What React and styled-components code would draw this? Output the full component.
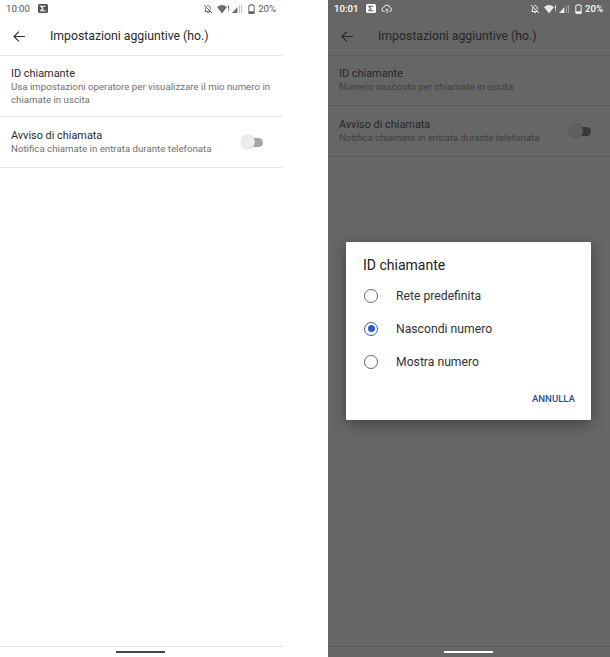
import React from 'react';
import styled, { createGlobalStyle } from 'styled-components';

const GlobalStyle = createGlobalStyle`
  html, body {
    margin: 0;
    padding: 0;
    background: #fff;
    font-family: Roboto, "Liberation Sans", sans-serif;
  }
`;

const Page = styled.div`
  display: flex;
  justify-content: space-between;
  width: 610px;
  height: 657px;
  overflow: hidden;
`;

const Screen = styled.div`
  position: relative;
  display: flex;
  flex-direction: column;
  width: ${(p) => (p.$dark ? '282px' : '283px')};
  height: 657px;
  background: ${(p) => (p.$dark ? '#666666' : '#ffffff')};
  --title: ${(p) => (p.$dark ? '#262626' : '#2b2b2b')};
  --sub: ${(p) => (p.$dark ? '#3f3f3f' : '#707070')};
  --line: ${(p) => (p.$dark ? '#5a5a5a' : '#e4e4e4')};
  --status: ${(p) => (p.$dark ? '#ffffff' : '#555555')};
  --badge: ${(p) => (p.$dark ? '#666666' : '#ffffff')};
  --nav: ${(p) => (p.$dark ? '#ffffff' : '#444444')};
`;

const StatusBar = styled.div`
  display: flex;
  align-items: center;
  height: 17px;
  padding: 0 7px 0 6px;
  color: var(--status);
  font-size: 9.6px;
  font-weight: ${(p) => (p.$dark ? 500 : 400)};
`;

const Time = styled.span`
  margin-right: 8px;
`;

const StatusIcons = styled.div`
  display: flex;
  align-items: center;
  margin-left: auto;
`;

const Icon = styled.svg`
  display: block;
  flex: none;
  margin-left: ${(p) => p.$ml || 0}px;
`;

const Percent = styled.span`
  margin-left: 3px;
`;

const Toolbar = styled.div`
  display: flex;
  align-items: center;
  height: 38px;
  padding-left: 13px;
  border-bottom: 1px solid var(--line);
`;

const Title = styled.div`
  margin-left: 25px;
  color: var(--title);
  font-size: 12.25px;
  line-height: 18px;
`;

const Row = styled.div`
  display: flex;
  align-items: center;
  justify-content: space-between;
  height: ${(p) => p.$height}px;
  padding: 0 0 ${(p) => p.$bottom || 0}px 11px;
  box-sizing: border-box;
  border-bottom: 1px solid var(--line);
`;

const RowText = styled.div`
  display: flex;
  flex-direction: column;
`;

const RowTitle = styled.div`
  color: var(--title);
  font-size: 10.9px;
  line-height: 15px;
`;

const RowSub = styled.div`
  max-width: 262px;
  color: var(--sub);
  font-size: 9.7px;
  line-height: 12.5px;
`;

const Toggle = styled.div`
  position: relative;
  flex: none;
  width: 18px;
  height: 9px;
  margin: 0 ${(p) => (p.$dark ? 19 : 20)}px 0 4px;
  border-radius: 5px;
  background: ${(p) => (p.$dark ? '#383838' : '#a4a4a4')};
`;

const Knob = styled.div`
  position: absolute;
  left: -4px;
  top: -3px;
  width: 14px;
  height: 14px;
  border-radius: 50%;
  background: ${(p) => (p.$dark ? '#5f5f5f' : '#ececec')};
  box-shadow: 0 0 1px rgba(0, 0, 0, 0.3);
`;

const NavBar = styled.div`
  display: flex;
  justify-content: center;
  align-items: center;
  height: 10px;
  margin-top: auto;
  border-top: 1px solid var(--line);
`;

const NavPill = styled.div`
  width: 49px;
  height: 2px;
  margin-right: 2px;
  background: var(--nav);
`;

const Dialog = styled.div`
  position: absolute;
  left: 18px;
  top: 242px;
  display: flex;
  flex-direction: column;
  width: 245px;
  height: 178px;
  padding: 15px 16px 0 17px;
  box-sizing: border-box;
  background: #fff;
  border-radius: 1px;
  box-shadow: 0 4px 14px rgba(0, 0, 0, 0.35);
`;

const DialogTitle = styled.div`
  margin-bottom: 6px;
  color: #222;
  font-size: 14px;
  line-height: 16px;
`;

const Option = styled.div`
  display: flex;
  align-items: center;
  gap: 18px;
  height: 33px;
  color: #333;
  font-size: 12.2px;
`;

const Radio = styled.span`
  display: flex;
  align-items: center;
  justify-content: center;
  width: 12px;
  height: 12px;
  border: 1.5px solid ${(p) => (p.$on ? '#2f5bc4' : '#666')};
  border-radius: 50%;
  margin-left: 1px;

  &::after {
    content: '';
    display: ${(p) => (p.$on ? 'block' : 'none')};
    width: 7px;
    height: 7px;
    border-radius: 50%;
    background: #2f5bc4;
  }
`;

const Actions = styled.div`
  display: flex;
  justify-content: flex-end;
  margin-top: 15px;
`;

const CancelButton = styled.div`
  color: #2c4f9e;
  font-size: 9.6px;
  font-weight: 500;
`;

const BackIcon = () => (
  <Icon width="12" height="11" viewBox="0 0 12 11" fill="none" stroke="var(--title)" strokeWidth="1.1">
    <path d="M12 5.5H1M5.8.7L1 5.5l4.8 4.8" />
  </Icon>
);

const SigmaIcon = () => (
  <Icon width="10" height="9" viewBox="0 0 10 9">
    <rect width="10" height="9" rx="1.5" fill="var(--status)" />
    <path d="M7.5 2.2H2.8L5 4.5 2.8 6.8h4.7" fill="none" stroke="var(--badge)" strokeWidth="1.1" />
  </Icon>
);

const CloudIcon = () => (
  <Icon $ml={5} width="12" height="10" viewBox="0 0 12 10" fill="none" stroke="var(--status)" strokeWidth="0.9">
    <path d="M3.5 7.5H3a2 2 0 0 1-.2-4A3.2 3.2 0 0 1 9 3.6a2 2 0 0 1 0 3.9h-.5M6 9V5M4.6 6.2L6 4.8l1.4 1.4" />
  </Icon>
);

const BellOffIcon = () => (
  <Icon width="10" height="10" viewBox="0 0 10 10" fill="none" stroke="var(--status)" strokeWidth="0.9">
    <path d="M1 1l8 8M3 3.2C2.7 3.8 2.7 4.5 2.7 6L1.8 7.4h5.6M3.8 1.9C5.6 1 7.3 2.2 7.3 4.2v1.4M4.2 8.6h1.6" />
  </Icon>
);

const WifiIcon = () => (
  <Icon $ml={4} width="13" height="10" viewBox="0 0 13 10">
    <path d="M0 3a8 8 0 0 1 10 0L5 9.5z" fill="var(--status)" opacity="0.85" />
    <path d="M11.5 1.5v3.2M11.5 5.7v1" stroke="var(--status)" strokeWidth="1" />
  </Icon>
);

const SignalIcon = () => (
  <Icon $ml={2} width="10" height="10" viewBox="0 0 10 10">
    <path d="M0 9l5.5-6V9z" fill="var(--status)" opacity="0.85" />
    <path d="M7.5 1v8M9.5 1v8" stroke="var(--status)" strokeWidth="0.8" opacity="0.45" />
  </Icon>
);

const BatteryIcon = () => (
  <Icon $ml={6} width="7" height="10" viewBox="0 0 7 10">
    <path d="M2.4.6h2.2v1h1.6v7.8H.8V1.6h1.6z" fill="none" stroke="var(--status)" strokeWidth="0.9" />
    <rect x="1" y="7.4" width="5" height="2" fill="var(--status)" />
  </Icon>
);

const Phone = ({ dark, time, subtitle, children }) => (
  <Screen $dark={dark}>
    <StatusBar $dark={dark}>
      <Time>{time}</Time>
      <SigmaIcon />
      {dark && <CloudIcon />}
      <StatusIcons>
        <BellOffIcon />
        <WifiIcon />
        <SignalIcon />
        <BatteryIcon />
        <Percent>20%</Percent>
      </StatusIcons>
    </StatusBar>
    <Toolbar>
      <BackIcon />
      <Title>Impostazioni aggiuntive (ho.)</Title>
    </Toolbar>
    <Row $height={dark ? 50 : 61} $bottom={dark ? 2 : 0}>
      <RowText>
        <RowTitle>ID chiamante</RowTitle>
        <RowSub>{subtitle}</RowSub>
      </RowText>
    </Row>
    <Row $height={51}>
      <RowText>
        <RowTitle>Avviso di chiamata</RowTitle>
        <RowSub>Notifica chiamate in entrata durante telefonata</RowSub>
      </RowText>
      <Toggle $dark={dark}>
        <Knob $dark={dark} />
      </Toggle>
    </Row>
    <NavBar>
      <NavPill />
    </NavBar>
    {children}
  </Screen>
);

const App = () => (
  <Page>
    <GlobalStyle />
    <Phone
      time="10:00"
      subtitle="Usa impostazioni operatore per visualizzare il mio numero in chiamate in uscita"
    />
    <Phone dark time="10:01" subtitle="Numero nascosto per chiamate in uscita">
      <Dialog>
        <DialogTitle>ID chiamante</DialogTitle>
        <Option>
          <Radio />
          Rete predefinita
        </Option>
        <Option>
          <Radio $on />
          Nascondi numero
        </Option>
        <Option>
          <Radio />
          Mostra numero
        </Option>
        <Actions>
          <CancelButton>ANNULLA</CancelButton>
        </Actions>
      </Dialog>
    </Phone>
  </Page>
);

export default App;
